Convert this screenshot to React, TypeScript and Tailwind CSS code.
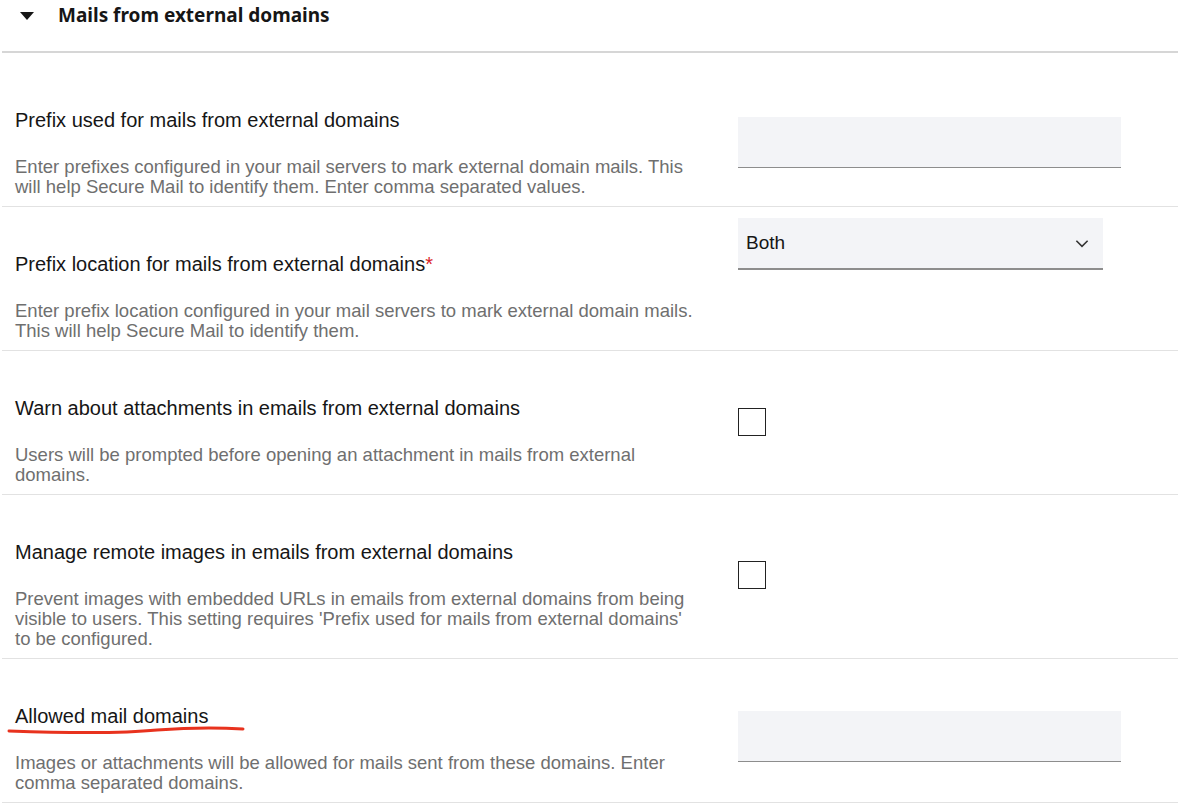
import React from "react";

type Row = {
  title: string;
  required?: boolean;
  desc: string[];
  control: "input" | "select" | "check";
  pt: number;
  ctrlTop: number;
  mark?: boolean;
};

const rows: Row[] = [
  {
    title: "Prefix used for mails from external domains",
    desc: [
      "Enter prefixes configured in your mail servers to mark external domain mails. This",
      "will help Secure Mail to identify them. Enter comma separated values.",
    ],
    control: "input",
    pt: 56,
    ctrlTop: 64,
  },
  {
    title: "Prefix location for mails from external domains",
    required: true,
    desc: [
      "Enter prefix location configured in your mail servers to mark external domain mails.",
      "This will help Secure Mail to identify them.",
    ],
    control: "select",
    pt: 46,
    ctrlTop: 11,
  },
  {
    title: "Warn about attachments in emails from external domains",
    desc: [
      "Users will be prompted before opening an attachment in mails from external",
      "domains.",
    ],
    control: "check",
    pt: 46,
    ctrlTop: 57,
  },
  {
    title: "Manage remote images in emails from external domains",
    desc: [
      "Prevent images with embedded URLs in emails from external domains from being",
      "visible to users. This setting requires 'Prefix used for mails from external domains'",
      "to be configured.",
    ],
    control: "check",
    pt: 46,
    ctrlTop: 66,
  },
  {
    title: "Allowed mail domains",
    desc: [
      "Images or attachments will be allowed for mails sent from these domains. Enter",
      "comma separated domains.",
    ],
    control: "input",
    pt: 46,
    ctrlTop: 52,
    mark: true,
  },
];

function Control({ kind, top }: { kind: Row["control"]; top: number }) {
  if (kind === "input")
    return <div style={{ marginTop: top }} className="w-[383px] h-[51px] bg-[#f3f4f7] border-b border-[#8d8d8d]" />;
  if (kind === "select")
    return (
      <div style={{ marginTop: top }} className="w-[365px] h-[52px] bg-[#f3f4f7] border-b-2 border-[#8d8d8d] flex items-center justify-between pl-2 pr-3">
        <span className="text-[19px] text-[#161616]">Both</span>
        <svg width="18" height="18" viewBox="0 0 16 16" fill="none" stroke="#333" strokeWidth="1.4">
          <path d="M3 6l5 5 5-5" />
        </svg>
      </div>
    );
  return <div style={{ marginTop: top }} className="w-[28px] h-[28px] border-[1.5px] border-[#222] bg-white" />;
}

export default function App() {
  return (
    <div className="w-[1200px] h-[808px] bg-white overflow-hidden" style={{ fontFamily: "'Liberation Sans', Arial, sans-serif" }}>
      <div className="mx-[2px] w-[1176px] h-[53px] border-b-2 border-[#d6d6d6] flex items-start pt-[1px]">
        <svg width="14" height="8" viewBox="0 0 14 8" className="ml-[18px] mt-[11px]">
          <path d="M0 0h14L7 8z" fill="#161616" />
        </svg>
        <span className="ml-[24px] text-[19px] font-bold text-[#161616]" style={{ fontFamily: "'Noto Sans', sans-serif" }}>
          Mails from external domains
        </span>
      </div>
      {rows.map((r, i) => (
        <div key={i} className="mx-[2px] w-[1176px] flex border-b border-[#e2e2e2]" style={{ paddingTop: r.pt }}>
          <div className="w-[736px] pl-[13px] pb-[9px]">
            <div className="relative text-[20px] leading-[22px] text-[#161616]">
              {r.title}
              {r.required && <span className="text-[#da1e28]">*</span>}
              {r.mark && (
                <svg className="absolute left-[-8px] top-[19px]" width="240" height="12" viewBox="0 0 240 12">
                  <path d="M2 7 C60 9 110 10 150 6 C190 3 220 4 236 5" stroke="#e8321e" strokeWidth="3" fill="none" strokeLinecap="round" />
                </svg>
              )}
            </div>
            <div className="mt-[26px] text-[18.5px] leading-[20px] text-[#6f6f6f]">
              {r.desc.map((d, j) => (
                <div key={j} className="whitespace-nowrap">{d}</div>
              ))}
            </div>
          </div>
          <div style={{ marginTop: -r.pt }}>
            <Control kind={r.control} top={r.ctrlTop} />
          </div>
        </div>
      ))}
    </div>
  );
}
